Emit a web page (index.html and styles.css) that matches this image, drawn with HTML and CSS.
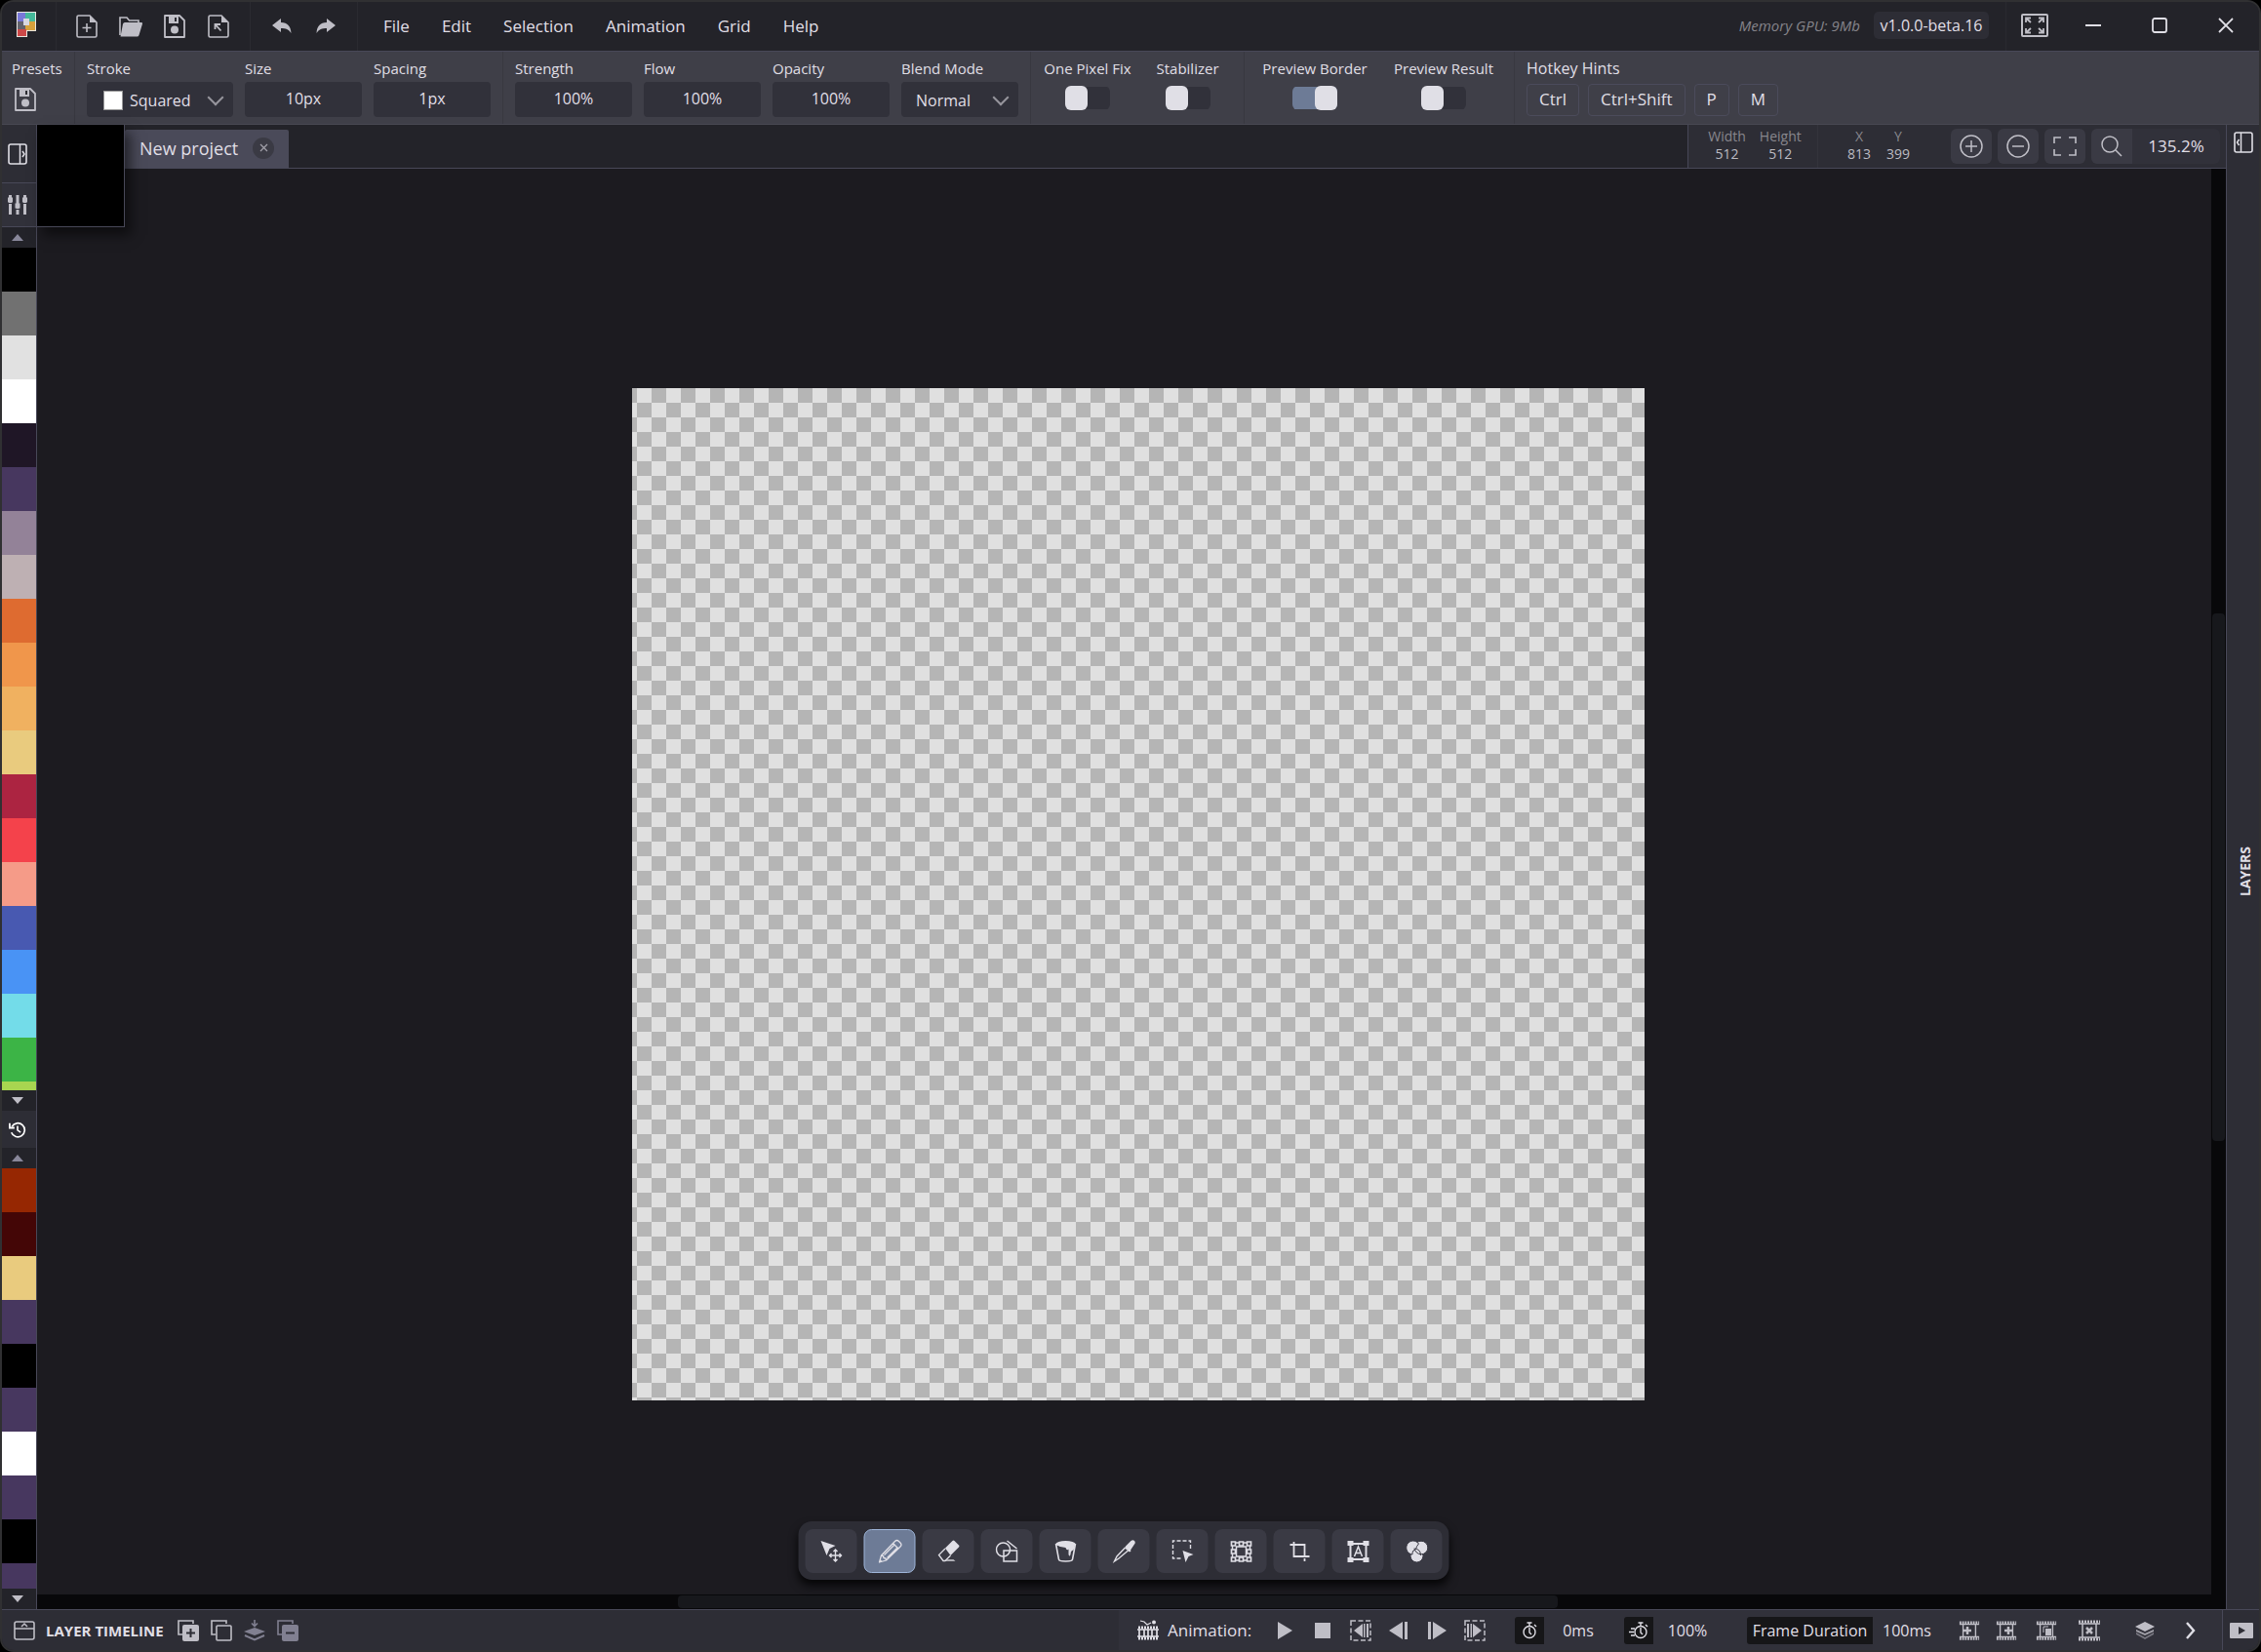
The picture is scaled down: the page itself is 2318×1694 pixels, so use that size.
FILE: index.html
```
<!DOCTYPE html>
<html lang="en">
<head>
<meta charset="utf-8">
<title>New project</title>
<link rel="stylesheet" href="styles.css">
</head>
<body>
<svg class="sprite" aria-hidden="true">
  <symbol id="save" viewBox="0 0 24 24"><path d="M2 1h15l5 5v17H2z" fill="none" stroke="currentColor" stroke-width="1.800" stroke-linejoin="round"/><path d="M6 1h10v8H6z" fill="currentColor"/><path d="M12 3h2v4h-2z" fill="#2b2b31"/><circle cx="12" cy="15.500" r="4" fill="currentColor"/></symbol>
  <symbol id="film" viewBox="0 0 24 22"><path d="M1 2h22M1 20h22" stroke="currentColor" stroke-width="3" fill="none" stroke-dasharray="2 1"/><path d="M1 4h22M1 18h22M5 4v14M19 4v14" stroke="currentColor" stroke-width="1.500" fill="none"/></symbol>
</svg>
<div class="window">
  <header class="titlebar">
    <div class="logo">
      <svg width="20" height="26" viewBox="0 0 20 26"><path d="M0 0h20v20h-9v6H0z" fill="#e8e6e0"/><path d="M1 1h8v9H1z" fill="#7878d8"/><path d="M9 1h10v9H9z" fill="#45b99a"/><path d="M1 10h8v8H1z" fill="#62626c"/><path d="M9 10h10v9H9z" fill="#d6a13c"/><path d="M1 18h9v7H1z" fill="#cc4848"/><path d="M7 7h6v7H7z" fill="#d8d8e0"/></svg>
    </div>
    <div class="icon-group files">
      <button class="icon-btn" aria-label="New"><svg width="22" height="24" viewBox="0 0 22 24"><path d="M1 2.500Q1 1 2.500 1H14l7 7v13.500q0 1.500-1.500 1.500h-17Q1 23 1 21.500z" fill="none" stroke="currentColor" stroke-width="1.600"/><path d="M14 1l7 7h-7z" fill="currentColor"/><path d="M11 9v9M6.500 13.500h9" stroke="currentColor" stroke-width="1.600"/></svg></button>
      <button class="icon-btn" aria-label="Open"><svg width="24" height="22" viewBox="0 0 24 22"><path d="M1 20V2h7l2.500 3H20v3" fill="none" stroke="currentColor" stroke-width="1.600"/><path d="M6 7h17q1.500 0 1 1.500L20.500 20q-.5 1.500-2 1.500H1.500L4 8.500Q4.500 7 6 7z" fill="currentColor"/></svg></button>
      <button class="icon-btn" aria-label="Save"><svg width="24" height="24"><use href="#save"/></svg></button>
      <button class="icon-btn" aria-label="Export"><svg width="22" height="24" viewBox="0 0 22 24"><path d="M1 2.500Q1 1 2.500 1H14l7 7v13.500q0 1.500-1.500 1.500h-17Q1 23 1 21.500z" fill="none" stroke="currentColor" stroke-width="1.600"/><path d="M14 1l7 7h-7z" fill="currentColor"/><path d="M7.500 15V10H13M8 10.500l5.500 6" fill="none" stroke="currentColor" stroke-width="1.800"/></svg></button>
    </div>
    <div class="icon-group history">
      <button class="icon-btn" aria-label="Undo"><svg width="20" height="16" viewBox="0 0 20 16"><path d="M0 7L9 0v4c7 0 10 4 10.500 11C17 11 14 10 9 10v4z" fill="currentColor"/></svg></button>
      <button class="icon-btn" aria-label="Redo"><svg width="20" height="16" viewBox="0 0 20 16"><path d="M20 7L11 0v4C4 4 1 8 .500 15 3 11 6 10 11 10v4z" fill="currentColor"/></svg></button>
    </div>
    <nav class="menu">
      <button>File</button><button>Edit</button><button>Selection</button><button>Animation</button><button>Grid</button><button>Help</button>
    </nav>
    <span class="memory">Memory GPU: 9Mb</span>
    <span class="version">v1.0.0-beta.16</span>
    <div class="window-controls">
      <button class="fullscreen" aria-label="Full screen"><svg width="28" height="24" viewBox="0 0 28 24"><rect x="1" y="1" width="26" height="22" rx="1" fill="none" stroke="currentColor" stroke-width="2"/><path d="M5 9V4.500h5M18 4.500h5V9M23 15v4.500h-5M10 19.500H5V15M5.500 5L10 9M22.500 5L18 9M22.500 19L18 15M5.500 19L10 15" fill="none" stroke="currentColor" stroke-width="1.800"/></svg></button>
      <button aria-label="Minimize"><svg width="16" height="16"><path d="M0 8h16" stroke="currentColor" stroke-width="2"/></svg></button>
      <button aria-label="Maximize"><svg width="16" height="16"><rect x="1" y="1" width="14" height="14" rx="2" fill="none" stroke="currentColor" stroke-width="1.800"/></svg></button>
      <button aria-label="Close"><svg width="16" height="16"><path d="M1 1l14 14M15 1L1 15" stroke="currentColor" stroke-width="1.800"/></svg></button>
    </div>
  </header>

  <section class="toolbar">
    <div class="tool-group presets">
      <span class="caption">Presets</span>
      <button class="icon-btn preset-save" aria-label="Save preset"><svg width="24" height="24"><use href="#save"/></svg></button>
    </div>
    <div class="tool-group">
      <div class="field stroke"><label for="stroke">Stroke</label><div class="select-box"><i class="stroke-tip"></i><select id="stroke"><option>Squared</option></select></div></div>
      <div class="field"><label for="size">Size</label><input id="size" type="text" value="10px"></div>
      <div class="field"><label for="spacing">Spacing</label><input id="spacing" type="text" value="1px"></div>
    </div>
    <div class="tool-group">
      <div class="field"><label for="strength">Strength</label><input id="strength" type="text" value="100%"></div>
      <div class="field"><label for="flow">Flow</label><input id="flow" type="text" value="100%"></div>
      <div class="field"><label for="opacity">Opacity</label><input id="opacity" type="text" value="100%"></div>
      <div class="field"><label for="blend">Blend Mode</label><div class="select-box blend"><select id="blend"><option>Normal</option></select></div></div>
    </div>
    <div class="tool-group switches">
      <div class="switch wide"><label for="pixelfix">One Pixel Fix</label><input id="pixelfix" type="checkbox"></div>
      <div class="switch narrow"><label for="stabilizer">Stabilizer</label><input id="stabilizer" type="checkbox"></div>
    </div>
    <div class="tool-group switches previews">
      <div class="switch"><label for="pborder">Preview Border</label><input id="pborder" type="checkbox" checked></div>
      <div class="switch"><label for="presult">Preview Result</label><input id="presult" type="checkbox"></div>
    </div>
    <div class="tool-group hotkeys">
      <span class="caption">Hotkey Hints</span>
      <div class="keys"><kbd>Ctrl</kbd><kbd>Ctrl+Shift</kbd><kbd>P</kbd><kbd>M</kbd></div>
    </div>
  </section>

  <div class="workspace">
    <aside class="palette">
      <button class="panel-toggle" aria-label="Expand palette"><svg width="20" height="22" viewBox="0 0 20 22"><rect x="1" y="1" width="18" height="20" rx="2" fill="none" stroke="currentColor" stroke-width="1.600"/><path d="M12.500 1v20M15 8l2 3-2 3" fill="none" stroke="currentColor" stroke-width="1.500"/></svg></button>
      <button class="mixer" aria-label="Color sliders"><svg width="20" height="20" viewBox="0 0 20 20"><path d="M2.500 0v20M10 0v20M17.500 0v20" stroke="currentColor" stroke-width="3"/><path d="M0 8.500h5M7.500 14.500h5M15 8.500h5" stroke="#31313a" stroke-width="1"/><path d="M0 5h5M7.500 11h5M15 5h5" stroke="currentColor" stroke-width="5"/></svg></button>
      <button class="scroll-arrow up" aria-label="Scroll up"></button>
      <div class="swatches main">
        <i class="c-black"></i><i class="c-gray"></i><i class="c-light"></i><i class="c-white"></i><i class="c-night"></i><i class="c-purple"></i><i class="c-mauve"></i><i class="c-dusk"></i><i class="c-rust"></i><i class="c-orange"></i><i class="c-amber"></i><i class="c-sand"></i><i class="c-crimson"></i><i class="c-red"></i><i class="c-salmon"></i><i class="c-indigo"></i><i class="c-blue"></i><i class="c-cyan"></i><i class="c-green"></i><i class="c-lime"></i>
      </div>
      <button class="scroll-arrow down" aria-label="Scroll down"></button>
      <button class="recent" aria-label="Recent colors"><svg width="18" height="17" viewBox="0 0 20 18"><path d="M3.500 5.500A7.800 7.800 0 1 1 3 12" fill="none" stroke="currentColor" stroke-width="1.900"/><path d="M1 1.500v5.300h5.500" fill="none" stroke="currentColor" stroke-width="2"/><path d="M10 4.500v5l3.500 2.500" fill="none" stroke="currentColor" stroke-width="1.800"/></svg></button>
      <button class="scroll-arrow up" aria-label="Scroll up"></button>
      <div class="swatches">
        <i class="c-brick"></i><i class="c-maroon"></i><i class="c-sand"></i><i class="c-purple"></i><i class="c-black"></i><i class="c-purple"></i><i class="c-white"></i><i class="c-purple"></i><i class="c-black"></i><i class="c-purple"></i>
      </div>
      <button class="scroll-arrow down" aria-label="Scroll down"></button>
    </aside>
    <div class="color-flyout"></div>

    <main class="document">
      <div class="tabbar">
        <div class="tab">New project <button class="close-tab" aria-label="Close tab"><svg width="9" height="9"><path d="M1 1l7 7M8 1L1 8" stroke="currentColor" stroke-width="1.300"/></svg></button></div>
        <div class="status">
          <div class="metrics size"><div><b>Width</b><span>512</span></div><div><b>Height</b><span>512</span></div></div>
          <div class="metrics"><div><b>X</b><span>813</span></div><div><b>Y</b><span>399</span></div></div>
          <div class="zoom">
            <button aria-label="Zoom in"><svg width="24" height="24"><circle cx="12" cy="12" r="11" fill="none" stroke="currentColor" stroke-width="1.500"/><path d="M12 6v12M6 12h12" stroke="currentColor" stroke-width="1.500"/></svg></button>
            <button aria-label="Zoom out"><svg width="24" height="24"><circle cx="12" cy="12" r="11" fill="none" stroke="currentColor" stroke-width="1.500"/><path d="M6 12h12" stroke="currentColor" stroke-width="1.500"/></svg></button>
            <button aria-label="Fit"><svg width="24" height="20"><path d="M1 7V1h7M16 1h7v6M23 13v6h-7M8 19H1v-6" fill="none" stroke="currentColor" stroke-width="1.600"/></svg></button>
            <div class="zoom-field"><button aria-label="Zoom level"><svg width="22" height="22"><circle cx="9" cy="9" r="8" fill="none" stroke="currentColor" stroke-width="1.500"/><path d="M15 15l6 6" stroke="currentColor" stroke-width="1.500"/></svg></button><input type="text" value="135.2%" aria-label="Zoom"></div>
          </div>
        </div>
      </div>
      <div class="viewport">
        <div class="stage"><div class="canvas"></div></div>
        <div class="vscroll"><i></i></div>
        <div class="hscroll"><i></i></div>
        <div class="tools">
          <button aria-label="Move"><svg width="24" height="24"><path d="M1 1l15 5-6 3-3 7z" fill="currentColor"/><path d="M16 10v12M10 16h12M14 12l2-2 2 2M14 20l2 2 2-2M12 14l-2 2 2 2M20 14l2 2-2 2" fill="none" stroke="currentColor" stroke-width="1.400"/></svg></button>
          <button class="active" aria-label="Pencil"><svg width="26" height="26"><path d="M2 24l2-7L18 2.500q2-2 4 0l1.500 1.500q2 2 0 4L9 22zM4 17l2 .500.500 2 2 .500L9 22M16 4.500l5.500 5.500M7 16.500l11-11M10 19.500l11-11" fill="none" stroke="currentColor" stroke-width="1.300" stroke-linejoin="round"/><path d="M2 24l1-3 2 2z" fill="currentColor"/></svg></button>
          <button aria-label="Eraser"><svg width="24" height="24"><path d="M8.500 8.500L16 1q1-1 2 0l4.500 4.500q1 1 0 2L14 16z" fill="currentColor"/><path d="M8.500 9L2 15.500l4.500 6h2L14 16" fill="none" stroke="currentColor" stroke-width="1.300"/><path d="M11 20h6l2 2H8z" fill="currentColor" opacity=".7"/></svg></button>
          <button aria-label="Shapes"><svg width="24" height="24"><circle cx="8" cy="10" r="7" fill="none" stroke="currentColor" stroke-width="1.500"/><path d="M8.500 11H22v11H8.500zM12 1l10 8" fill="none" stroke="currentColor" stroke-width="1.500"/></svg></button>
          <button aria-label="Fill"><svg width="24" height="24"><ellipse cx="12" cy="4" rx="10" ry="3" fill="currentColor"/><path d="M2 4l3 16q0 2 7 2t7-2l3-16" fill="none" stroke="currentColor" stroke-width="1.600"/><path d="M2 5q5 3 10 3 1 3 2.500 2 .5-1 .5 0v5q1 3 2 0 0-3 1.500-4 2 0 2-2L22 4z" fill="currentColor"/></svg></button>
          <button aria-label="Eyedropper"><svg width="24" height="24"><path d="M14 6l5-5q2-1.500 3.500 0t0 3.500l-4 6 .500 1-1.500 1-5-4 1-2z" fill="currentColor"/><path d="M13 8L4.500 17 2 22l4.500-3L16 11" fill="none" stroke="currentColor" stroke-width="1.400"/></svg></button>
          <button aria-label="Select"><svg width="24" height="24"><path d="M10 19H2V1h18v10" fill="none" stroke="currentColor" stroke-width="1.400" stroke-dasharray="4 2"/><path d="M12 11l11 4-5 2-3 6z" fill="currentColor"/></svg></button>
          <button aria-label="Transform"><svg width="24" height="24"><path d="M3 3h18v18H3zM7 7h10v10H7z" fill="none" stroke="currentColor" stroke-width="1.500"/><g fill="#3a3a44" stroke="currentColor" stroke-width="1.700"><path d="M2 2h4v4H2zM10 2h4v4h-4zM18 2h4v4h-4zM2 10h4v4H2zM18 10h4v4h-4zM2 18h4v4H2zM10 18h4v4h-4zM18 18h4v4h-4z"/></g></svg></button>
          <button aria-label="Crop"><svg width="24" height="24"><path d="M6 2v15h16M2 5h15v12M17 19v3" fill="none" stroke="currentColor" stroke-width="1.800"/></svg></button>
          <button aria-label="Text"><svg width="24" height="24"><path d="M4 4h16v16H4z" fill="none" stroke="currentColor" stroke-width="2"/><path d="M1 1h6v5H1zM17 1h6v5h-6zM1 18h6v5H1zM17 18h6v5h-6z" fill="currentColor"/><path d="M8 17l4-10 4 10M9.500 13.500h5" fill="none" stroke="currentColor" stroke-width="1.500"/></svg></button>
          <button aria-label="Blend colors"><svg width="24" height="24"><g fill="currentColor" stroke="#3a3a44" stroke-width="1"><circle cx="12" cy="16.500" r="6.500"/><circle cx="16.500" cy="8" r="6.800"/><path d="M14 4A7 7 0 1 0 7.500 15Q7 11 11 9.500 12 6 14 4z"/><path d="M9 9q7 0 7 7" fill="none"/></g></svg></button>
        </div>
      </div>
    </main>

    <aside class="layers">
      <button aria-label="Expand layers"><svg width="20" height="22" viewBox="0 0 20 22"><rect x="1" y="1" width="18" height="20" rx="2" fill="none" stroke="currentColor" stroke-width="1.600"/><path d="M7.500 1v20M5.500 8l-2 3 2 3" fill="none" stroke="currentColor" stroke-width="1.500"/></svg></button>
      <span>LAYERS</span>
    </aside>
  </div>

  <footer class="timeline">
    <div class="timeline-left">
      <button aria-label="Expand timeline"><svg width="22" height="20"><rect x="1" y="1" width="20" height="18" rx="2" fill="none" stroke="currentColor" stroke-width="1.600"/><path d="M1 8h20M8 6l3-3 3 3" fill="none" stroke="currentColor" stroke-width="1.500"/></svg></button>
      <span class="title">LAYER TIMELINE</span>
      <button aria-label="Add layer"><svg width="22" height="22"><path d="M5 15H1V1h15v3" fill="none" stroke="currentColor" stroke-width="1.600"/><rect x="5" y="5" width="17" height="17" rx="2" fill="currentColor"/><path d="M13.500 9v9M9 13.500h9" stroke="#2d2d35" stroke-width="2"/></svg></button>
      <button aria-label="Duplicate layer"><svg width="22" height="22"><path d="M5 15H1V1h15v3" fill="none" stroke="currentColor" stroke-width="1.600"/><rect x="6" y="6" width="15" height="15" rx="1" fill="none" stroke="currentColor" stroke-width="1.600"/></svg></button>
      <button class="dim" aria-label="Merge down" disabled><svg width="22" height="22"><path d="M11 0v6M8 3.500l3 3 3-3" fill="none" stroke="currentColor" stroke-width="1.600"/><path d="M0 12l11-4 11 4-11 4z" fill="currentColor"/><path d="M1 16l10 4.500L21 16" fill="none" stroke="currentColor" stroke-width="2"/></svg></button>
      <button class="dim" aria-label="Delete layer" disabled><svg width="22" height="22"><path d="M5 15H1V1h15v3" fill="none" stroke="currentColor" stroke-width="1.600"/><rect x="5" y="5" width="17" height="17" rx="2" fill="currentColor"/><path d="M9 13.500h9" stroke="#2d2d35" stroke-width="2"/></svg></button>
    </div>
    <div class="timeline-right">
      <span class="anim"><svg width="22" height="22"><path d="M1 8h20M1 19h20" stroke="currentColor" stroke-width="3" stroke-dasharray="2 1"/><path d="M0 10h22M0 17h22M2 10v8M7 10v8M11 10v8M15 10v8M20 10v8" stroke="currentColor" stroke-width="1.700"/><path d="M3 1l4 1 3 3 4-2" fill="none" stroke="currentColor" stroke-width="1.200"/><circle cx="17" cy="2.500" r="2" fill="currentColor"/></svg>Animation:</span>
      <div class="playback">
        <button aria-label="Play"><svg width="16" height="18"><path d="M1 0l15 9-15 9z" fill="currentColor"/></svg></button>
        <button aria-label="Stop"><svg width="16" height="18"><path d="M0 1h16v16H0z" fill="currentColor"/></svg></button>
        <button aria-label="First frame"><svg width="22" height="22"><rect x="1" y="1" width="20" height="20" fill="none" stroke="currentColor" stroke-width="1.500" stroke-dasharray="5 2.500"/><path d="M4 11l9-7v14zM14 4h1.500v14H14zM17 4h2v14h-2z" fill="currentColor"/></svg></button>
        <button aria-label="Previous frame"><svg width="20" height="18"><path d="M0 9l14-9v18zM16 0h3v18h-3z" fill="currentColor"/></svg></button>
        <button aria-label="Next frame"><svg width="20" height="18"><path d="M20 9L6 0v18zM1 0h3v18H1z" fill="currentColor"/></svg></button>
        <button aria-label="Last frame"><svg width="22" height="22"><rect x="1" y="1" width="20" height="20" fill="none" stroke="currentColor" stroke-width="1.500" stroke-dasharray="5 2.500"/><path d="M18 11L9 4v14zM6.500 4H8v14H6.500zM3 4h2v14H3z" fill="currentColor"/></svg></button>
      </div>
      <div class="time"><label for="delay"><svg width="16" height="18"><circle cx="8" cy="10.500" r="6" fill="none" stroke="currentColor" stroke-width="1.400"/><path d="M8 6v5l2 2M5.500 1h5M8 1v3M13 3l2 2" fill="none" stroke="currentColor" stroke-width="1.400"/></svg></label><input id="delay" type="text" value="0ms"></div>
      <div class="time speed"><label for="speed"><svg width="20" height="18"><circle cx="12" cy="10.500" r="6" fill="none" stroke="currentColor" stroke-width="1.400"/><path d="M12 6v5l2 2M9.500 1h5M12 1v3M17 3l2 2M2 7h4M0 10.500h5M2 14h4" fill="none" stroke="currentColor" stroke-width="1.400"/></svg></label><input id="speed" type="text" value="100%"></div>
      <div class="time frame"><label for="duration">Frame Duration</label><input id="duration" type="text" value="100ms"></div>
      <div class="frames">
        <button aria-label="Add frame before"><svg width="22" height="22"><use href="#film"/><path d="M9 7v8M5 11h8" stroke="currentColor" stroke-width="2.500"/></svg></button>
        <button aria-label="Add frame after"><svg width="22" height="22"><use href="#film"/><path d="M13 7v8M9 11h8" stroke="currentColor" stroke-width="2.500"/></svg></button>
        <button class="wide" aria-label="Duplicate frame"><svg width="22" height="22"><use href="#film"/><path d="M8 13V7h5" fill="none" stroke="currentColor"/><path d="M10 9h6v7h-6z" fill="currentColor"/></svg></button>
        <button class="wide" aria-label="Delete frame"><svg width="24" height="22"><use href="#film"/><path d="M9 8l6 6M15 8l-6 6" stroke="currentColor" stroke-width="2.500"/></svg></button>
      </div>
      <button class="onion" aria-label="Onion skin"><svg width="20" height="18"><path d="M1 11l9 5 9-5v2l-9 5-9-5z" fill="currentColor" opacity=".5"/><path d="M1 8l9 4 9-4v2l-9 4-9-4z" fill="currentColor" opacity=".8"/><path d="M0 5l10-5 10 5-10 5z" fill="currentColor"/></svg></button>
      <button class="more" aria-label="More"><svg width="10" height="18"><path d="M1 1l7 8-7 8" fill="none" stroke="currentColor" stroke-width="2.400"/></svg></button>
    </div>
    <button class="preview" aria-label="Preview"><svg width="24" height="16"><rect width="24" height="16" rx="1" fill="currentColor"/><path d="M9 4l7 4-7 4z" fill="#2d2d35"/></svg></button>
  </footer>
</div>
</body>
</html>
```
FILE: styles.css
```
* { box-sizing: border-box; }
body {
  margin: 0;
  height: 100vh;
  background: #000;
  color: #e0dfe6;
  font-family: "Open Sans", "Noto Sans", sans-serif;
  font-size: 16px;
}
button, input, select { font: inherit; color: inherit; border: 0; padding: 0; margin: 0; background: none; }
button { display: flex; align-items: center; justify-content: center; }
svg { display: block; flex: none; }
i { display: block; }
.sprite { position: absolute; width: 0; height: 0; }

.window {
  display: flex;
  flex-direction: column;
  height: 100%;
  border: 2px solid #303032;
  border-radius: 14px;
  background: #232329;
  overflow: hidden;
}

/* Title bar */
.titlebar { display: flex; height: 51px; flex: none; border-bottom: 1px solid #484858; background: #232329; }
.titlebar > * { height: 100%; }
.logo { width: 56px; display: flex; align-items: center; justify-content: center; padding-right: 5px; padding-bottom: 4px; border-right: 1px solid #2a2a30; }
.icon-group { display: flex; align-items: center; border-right: 1px solid #2a2a30; color: #bfbec6; }
.icon-group .icon-btn { width: 45px; height: 48px; }
.files { width: 199px; padding-left: 8px; }
.history { width: 110px; padding-left: 9px; }
.menu { display: flex; gap: 1px; margin-right: auto; padding-left: 10px; }
.menu button { padding: 0 16px 2px; font-size: 17px; }
.memory { display: flex; align-items: center; padding-right: 14px; padding-bottom: 2px; color: #85848a; font-size: 15px; font-style: italic; }
.titlebar .version { align-self: center; display: flex; align-items: center; height: 28px; width: 118px; justify-content: center; margin-right: 17px; margin-bottom: 2px; border-radius: 5px; background: #2d2d35; font-size: 16px; }
.window-controls { display: flex; border-left: 1px solid #2a2a30; padding-left: 3px; padding-bottom: 2px; }
.window-controls button { width: 68px; }
.window-controls .fullscreen { width: 52px; color: #bfbec6; }

/* Tool settings */
.toolbar { display: flex; flex: none; height: 75px; border-bottom: 1px solid #484852; background: #3f3f48; }
.tool-group { display: flex; gap: 12px; padding: 7px 12px 0; border-right: 1px solid #383840; }
.tool-group:last-child { border: 0; }
.toolbar label, .caption { display: block; height: 24px; line-height: 20px; font-size: 15px; white-space: nowrap; }
.presets, .hotkeys { flex-direction: column; gap: 0; }
.presets { width: 75px; padding: 7px 10px 0; }
.preset-save { width: 28px; height: 36px; color: #bfbec6; }
.field { width: 120px; }
.stroke { width: 150px; }
.field input, .select-box { display: block; width: 100%; height: 36px; border-radius: 4px; background: #31313a; }
.field input { padding-bottom: 3px; text-align: center; }
.select-box { position: relative; display: flex; align-items: center; gap: 7px; padding: 1px 10px 0 17px; }
.select-box::after { content: ""; position: absolute; right: 12px; top: 10px; width: 10px; height: 10px; border: solid #96959c; border-width: 0 2px 2px 0; transform: rotate(45deg); pointer-events: none; }
.select-box select { flex: 1; height: 100%; appearance: none; outline: 0; }
.blend { padding-left: 15px; }
.stroke-tip { width: 20px; height: 20px; background: #fff; border: 1px solid #999; }
.switches { gap: 22px; padding-right: 24px; padding-left: 11px; }
.previews { padding: 7px 18px 0; gap: 24px; }
.switch { display: flex; flex-direction: column; align-items: center; width: 108px; }
.switch.wide { width: 94px; }
.switch.narrow { width: 67px; }
.switch label { height: 28px; }
.switch input { appearance: none; display: flex; align-items: center; width: 46px; height: 25px; border-radius: 6px; background: linear-gradient(#31313a, #31313a) center / 100% 23px no-repeat; }
.switch input::before { content: ""; width: 23px; height: 25px; border-radius: 6px; background: #e0dfe6; }
.switch input:checked { justify-content: flex-end; background-image: linear-gradient(#6d7b96, #6d7b96); }
.hotkeys .caption { height: 26px; font-size: 16px; }
.keys { display: flex; gap: 9px; }
kbd { height: 33px; padding: 0 12px; border: 1px solid #4b4b5b; border-radius: 4px; font: 17px/30px "Open Sans", "Noto Sans", sans-serif; }

/* Workspace */
.workspace { position: relative; display: flex; flex: 1; min-height: 0; }
.palette { display: flex; flex-direction: column; width: 36px; flex: none; border-right: 1px solid #484858; background: #2d2d35; }
.panel-toggle { height: 60px; flex: none; border-bottom: 1px solid #484858; }
.palette .panel-toggle, .palette .mixer, .recent { padding-right: 4px; }
.mixer { height: 45px; flex: none; border-bottom: 1px solid #484858; background: #31313a; color: #bfbec6; }
.recent { height: 38px; flex: none; color: #fff; }
.scroll-arrow { height: 21px; flex: none; background: #232329; padding-right: 3px; }
.scroll-arrow::before { content: ""; border: 6px solid transparent; }
.scroll-arrow.up::before { border-bottom: 7px solid #88879a; border-top: 0; }
.scroll-arrow.down::before { border-top: 7px solid #bfbec6; border-bottom: 0; }
.swatches { overflow: hidden; flex: 1 1 0; }
.swatches.main { flex: 0 1 864px; }
.swatches i { height: 45px; }
.c-black { background: #000; } .c-gray { background: #717171; } .c-light { background: #e1e1e1; } .c-white { background: #fff; }
.c-night { background: #1f1626; } .c-purple { background: #47375f; } .c-mauve { background: #938298; } .c-dusk { background: #beb0b3; }
.c-rust { background: #de6b30; } .c-orange { background: #f0964b; } .c-amber { background: #f0b160; } .c-sand { background: #e9cb7e; }
.c-crimson { background: #ac2441; } .c-red { background: #f4424b; } .c-salmon { background: #f59b88; } .c-indigo { background: #4859b1; }
.c-blue { background: #4993f5; } .c-cyan { background: #73dce9; } .c-green { background: #3cb446; } .c-lime { background: #a8d550; }
.c-brick { background: #962702; } .c-maroon { background: #440606; }
.color-flyout { position: absolute; left: 36px; top: 0; width: 90px; height: 105px; background: #000; border: solid #484858; border-width: 0 1px 1px 0; box-shadow: 6px 8px 12px #0008; z-index: 1; }

.document { display: flex; flex-direction: column; flex: 1; min-width: 0; }
.tabbar { display: flex; align-items: flex-end; justify-content: space-between; height: 45px; flex: none; border-bottom: 1px solid #484858; background: #232329; padding-left: 90px; }
.tab { display: flex; align-items: center; gap: 15px; height: 39px; padding: 0 15px 2px; border-radius: 2px 2px 0 0; background: #4a4a59; font-size: 18px; }
.close-tab { width: 22px; height: 22px; border-radius: 11px; background: #3a3a44; color: #a09fa8; }
.status { display: flex; height: 100%; border-left: 1px solid #484858; background: #2d2d35; }
.metrics { display: flex; justify-content: center; gap: 16px; width: 120px; padding: 4px 0 0 4px; text-align: center; font-size: 14px; }
.metrics.size { width: 133px; gap: 14px; border-right: 1px solid #34343c; }
.metrics b { display: block; font-weight: 400; color: #88878d; line-height: 16px; }
.metrics span { display: block; color: #bcbbc2; line-height: 20px; }
.zoom { display: flex; gap: 6px; padding: 4px 6px 4px 16px; color: #bfbec6; }
.zoom button { width: 42px; height: 36px; border-radius: 6px; background: #3a3a44; }
.zoom-field { display: flex; border-radius: 6px; background: #31313a; }
.zoom-field button { border-radius: 6px 0 0 6px; }
.zoom-field input { width: 90px; padding-bottom: 2px; text-align: center; font-size: 17px; color: #e0dfe6; }

.viewport { position: relative; flex: 1; min-height: 0; display: grid; grid-template: minmax(0, 1fr) 15px / minmax(0, 1fr) 15px; background: #08080a; }
.stage { display: flex; align-items: center; justify-content: center; padding: 26px 0 0 29px; background: #1c1b20; }
.canvas { width: 1038px; height: 1038px; background: conic-gradient(#b5b5b5 25%, #e0e0e0 0 50%, #b5b5b5 0 75%, #e0e0e0 0) 5px 0 / 30px 30px; }
.vscroll i { width: 13px; height: 37%; margin: 456px 1px 0; border-radius: 4px; background: #17181c; }
.hscroll { display: flex; justify-content: center; padding-right: 14px; }
.hscroll i { width: 902px; height: 13px; margin-top: 1px; border-radius: 4px; background: #17181c; }
.tools { position: absolute; left: 50%; bottom: 30px; transform: translateX(-50%); margin-left: -8px; display: flex; gap: 7px; padding: 8px 7px 7px; border-radius: 14px; background: #2d2d35; box-shadow: 0 6px 10px #000c; }
.tools button { width: 53px; height: 45px; border-radius: 8px; background: #3a3a44; }
.tools .active { background: #6d7b96; border: 1px solid #9eb5d8; }

.layers { display: flex; flex-direction: column; align-items: center; width: 34px; flex: none; border-left: 1px solid #484858; background: #2d2d35; }
.layers button { height: 36px; }
.layers span { margin: auto 0; padding: 26px 3px 0 0; writing-mode: vertical-rl; transform: rotate(180deg); font-size: 14px; font-weight: 700; }

/* Timeline bar */
.timeline { display: flex; flex: none; height: 42px; border-top: 1px solid #484858; background: #2d2d35; }
.timeline-left { display: flex; align-items: center; flex: 1; padding-left: 6px; color: #bfbec6; }
.timeline-left button { width: 34px; height: 40px; }
.timeline-left .title { width: 134px; padding-left: 5px; color: #e0dfe6; font-size: 15px; font-weight: 700; white-space: nowrap; }
.timeline .dim { color: #818091; }
.timeline-right { display: flex; align-items: center; padding: 0 12px 0 19px; background: #31313a; color: #bfbec6; }
.anim { display: flex; align-items: center; gap: 9px; width: 131px; color: #e0dfe6; font-size: 17px; }
.playback { display: flex; width: 256px; }
.playback button { width: 39px; height: 32px; }
.time { display: flex; height: 28px; margin-right: 12px; color: #e0dfe6; }
.time label { display: flex; align-items: center; justify-content: center; width: 30px; background: #161618; border-radius: 3px 0 0 3px; white-space: nowrap; }
.time input { width: 70px; text-align: center; }
.speed { margin-right: 26px; }
.frame { margin-right: 10px; }
.frame label { width: 129px; }
.frames { display: flex; padding-right: 8px; }
.frames button { width: 38px; height: 32px; }
.frames .wide { width: 44px; }
.onion { width: 54px; height: 32px; }
.more { width: 40px; height: 32px; color: #e0dfe6; }
.preview { width: 38px; border-left: 1px solid #484858; color: #bfbec6; }
```
